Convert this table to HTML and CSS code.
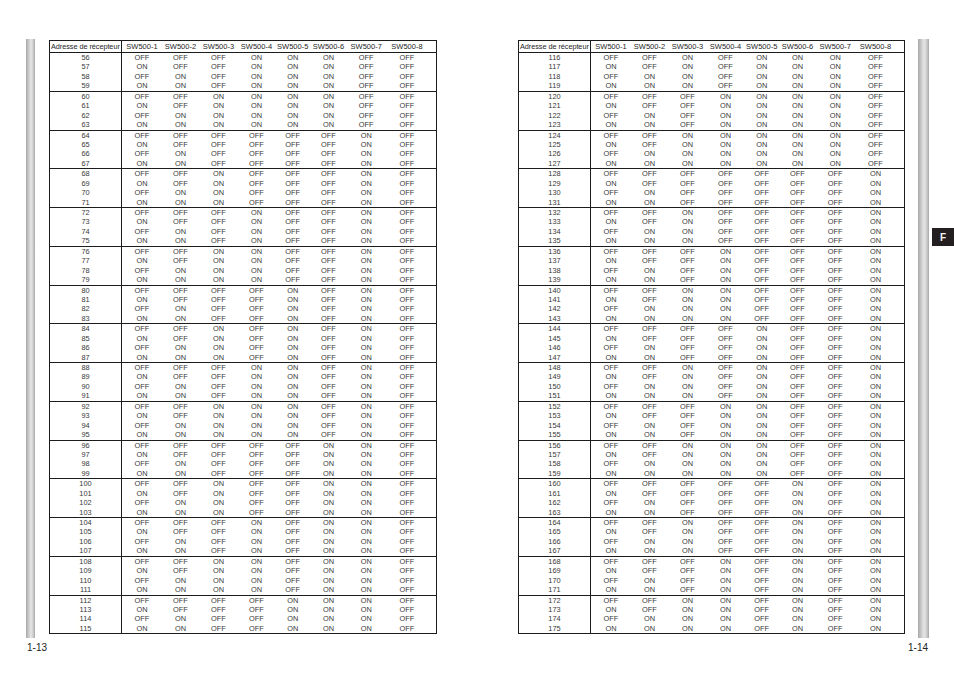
FILE: index.html
```html
<!DOCTYPE html>
<html lang="fr">
<head>
<meta charset="utf-8">
<title>Adresse de récepteur 56–175</title>
<link rel="stylesheet" href="styles.css">
</head>
<body>
<main class="spread">
  <section class="page page-left">
    <div class="page-body">
      <div class="bar"></div>
      <table class="sw">
        <thead><tr><th>Adresse de récepteur<th>SW500-1<th>SW500-2<th>SW500-3<th>SW500-4<th>SW500-5<th>SW500-6<th>SW500-7<th>SW500-8</tr></thead>
        <tbody>
        <tr><td>56<td>OFF<td>OFF<td>OFF<td>ON<td>ON<td>ON<td>OFF<td>OFF
        <tr><td>57<td>ON<td>OFF<td>OFF<td>ON<td>ON<td>ON<td>OFF<td>OFF
        <tr><td>58<td>OFF<td>ON<td>OFF<td>ON<td>ON<td>ON<td>OFF<td>OFF
        <tr><td>59<td>ON<td>ON<td>OFF<td>ON<td>ON<td>ON<td>OFF<td>OFF
        <tbody>
        <tr><td>60<td>OFF<td>OFF<td>ON<td>ON<td>ON<td>ON<td>OFF<td>OFF
        <tr><td>61<td>ON<td>OFF<td>ON<td>ON<td>ON<td>ON<td>OFF<td>OFF
        <tr><td>62<td>OFF<td>ON<td>ON<td>ON<td>ON<td>ON<td>OFF<td>OFF
        <tr><td>63<td>ON<td>ON<td>ON<td>ON<td>ON<td>ON<td>OFF<td>OFF
        <tbody>
        <tr><td>64<td>OFF<td>OFF<td>OFF<td>OFF<td>OFF<td>OFF<td>ON<td>OFF
        <tr><td>65<td>ON<td>OFF<td>OFF<td>OFF<td>OFF<td>OFF<td>ON<td>OFF
        <tr><td>66<td>OFF<td>ON<td>OFF<td>OFF<td>OFF<td>OFF<td>ON<td>OFF
        <tr><td>67<td>ON<td>ON<td>OFF<td>OFF<td>OFF<td>OFF<td>ON<td>OFF
        <tbody>
        <tr><td>68<td>OFF<td>OFF<td>ON<td>OFF<td>OFF<td>OFF<td>ON<td>OFF
        <tr><td>69<td>ON<td>OFF<td>ON<td>OFF<td>OFF<td>OFF<td>ON<td>OFF
        <tr><td>70<td>OFF<td>ON<td>ON<td>OFF<td>OFF<td>OFF<td>ON<td>OFF
        <tr><td>71<td>ON<td>ON<td>ON<td>OFF<td>OFF<td>OFF<td>ON<td>OFF
        <tbody>
        <tr><td>72<td>OFF<td>OFF<td>OFF<td>ON<td>OFF<td>OFF<td>ON<td>OFF
        <tr><td>73<td>ON<td>OFF<td>OFF<td>ON<td>OFF<td>OFF<td>ON<td>OFF
        <tr><td>74<td>OFF<td>ON<td>OFF<td>ON<td>OFF<td>OFF<td>ON<td>OFF
        <tr><td>75<td>ON<td>ON<td>OFF<td>ON<td>OFF<td>OFF<td>ON<td>OFF
        <tbody>
        <tr><td>76<td>OFF<td>OFF<td>ON<td>ON<td>OFF<td>OFF<td>ON<td>OFF
        <tr><td>77<td>ON<td>OFF<td>ON<td>ON<td>OFF<td>OFF<td>ON<td>OFF
        <tr><td>78<td>OFF<td>ON<td>ON<td>ON<td>OFF<td>OFF<td>ON<td>OFF
        <tr><td>79<td>ON<td>ON<td>ON<td>ON<td>OFF<td>OFF<td>ON<td>OFF
        <tbody>
        <tr><td>80<td>OFF<td>OFF<td>OFF<td>OFF<td>ON<td>OFF<td>ON<td>OFF
        <tr><td>81<td>ON<td>OFF<td>OFF<td>OFF<td>ON<td>OFF<td>ON<td>OFF
        <tr><td>82<td>OFF<td>ON<td>OFF<td>OFF<td>ON<td>OFF<td>ON<td>OFF
        <tr><td>83<td>ON<td>ON<td>OFF<td>OFF<td>ON<td>OFF<td>ON<td>OFF
        <tbody>
        <tr><td>84<td>OFF<td>OFF<td>ON<td>OFF<td>ON<td>OFF<td>ON<td>OFF
        <tr><td>85<td>ON<td>OFF<td>ON<td>OFF<td>ON<td>OFF<td>ON<td>OFF
        <tr><td>86<td>OFF<td>ON<td>ON<td>OFF<td>ON<td>OFF<td>ON<td>OFF
        <tr><td>87<td>ON<td>ON<td>ON<td>OFF<td>ON<td>OFF<td>ON<td>OFF
        <tbody>
        <tr><td>88<td>OFF<td>OFF<td>OFF<td>ON<td>ON<td>OFF<td>ON<td>OFF
        <tr><td>89<td>ON<td>OFF<td>OFF<td>ON<td>ON<td>OFF<td>ON<td>OFF
        <tr><td>90<td>OFF<td>ON<td>OFF<td>ON<td>ON<td>OFF<td>ON<td>OFF
        <tr><td>91<td>ON<td>ON<td>OFF<td>ON<td>ON<td>OFF<td>ON<td>OFF
        <tbody>
        <tr><td>92<td>OFF<td>OFF<td>ON<td>ON<td>ON<td>OFF<td>ON<td>OFF
        <tr><td>93<td>ON<td>OFF<td>ON<td>ON<td>ON<td>OFF<td>ON<td>OFF
        <tr><td>94<td>OFF<td>ON<td>ON<td>ON<td>ON<td>OFF<td>ON<td>OFF
        <tr><td>95<td>ON<td>ON<td>ON<td>ON<td>ON<td>OFF<td>ON<td>OFF
        <tbody>
        <tr><td>96<td>OFF<td>OFF<td>OFF<td>OFF<td>OFF<td>ON<td>ON<td>OFF
        <tr><td>97<td>ON<td>OFF<td>OFF<td>OFF<td>OFF<td>ON<td>ON<td>OFF
        <tr><td>98<td>OFF<td>ON<td>OFF<td>OFF<td>OFF<td>ON<td>ON<td>OFF
        <tr><td>99<td>ON<td>ON<td>OFF<td>OFF<td>OFF<td>ON<td>ON<td>OFF
        <tbody>
        <tr><td>100<td>OFF<td>OFF<td>ON<td>OFF<td>OFF<td>ON<td>ON<td>OFF
        <tr><td>101<td>ON<td>OFF<td>ON<td>OFF<td>OFF<td>ON<td>ON<td>OFF
        <tr><td>102<td>OFF<td>ON<td>ON<td>OFF<td>OFF<td>ON<td>ON<td>OFF
        <tr><td>103<td>ON<td>ON<td>ON<td>OFF<td>OFF<td>ON<td>ON<td>OFF
        <tbody>
        <tr><td>104<td>OFF<td>OFF<td>OFF<td>ON<td>OFF<td>ON<td>ON<td>OFF
        <tr><td>105<td>ON<td>OFF<td>OFF<td>ON<td>OFF<td>ON<td>ON<td>OFF
        <tr><td>106<td>OFF<td>ON<td>OFF<td>ON<td>OFF<td>ON<td>ON<td>OFF
        <tr><td>107<td>ON<td>ON<td>OFF<td>ON<td>OFF<td>ON<td>ON<td>OFF
        <tbody>
        <tr><td>108<td>OFF<td>OFF<td>ON<td>ON<td>OFF<td>ON<td>ON<td>OFF
        <tr><td>109<td>ON<td>OFF<td>ON<td>ON<td>OFF<td>ON<td>ON<td>OFF
        <tr><td>110<td>OFF<td>ON<td>ON<td>ON<td>OFF<td>ON<td>ON<td>OFF
        <tr><td>111<td>ON<td>ON<td>ON<td>ON<td>OFF<td>ON<td>ON<td>OFF
        <tbody>
        <tr><td>112<td>OFF<td>OFF<td>OFF<td>OFF<td>ON<td>ON<td>ON<td>OFF
        <tr><td>113<td>ON<td>OFF<td>OFF<td>OFF<td>ON<td>ON<td>ON<td>OFF
        <tr><td>114<td>OFF<td>ON<td>OFF<td>OFF<td>ON<td>ON<td>ON<td>OFF
        <tr><td>115<td>ON<td>ON<td>OFF<td>OFF<td>ON<td>ON<td>ON<td>OFF
        </tbody>
      </table>
    </div>
    <div class="folio">1-13</div>
  </section>

  <section class="page page-right">
    <div class="page-body">
      <table class="sw">
        <thead><tr><th>Adresse de récepteur<th>SW500-1<th>SW500-2<th>SW500-3<th>SW500-4<th>SW500-5<th>SW500-6<th>SW500-7<th>SW500-8</tr></thead>
        <tbody>
        <tr><td>116<td>OFF<td>OFF<td>ON<td>OFF<td>ON<td>ON<td>ON<td>OFF
        <tr><td>117<td>ON<td>OFF<td>ON<td>OFF<td>ON<td>ON<td>ON<td>OFF
        <tr><td>118<td>OFF<td>ON<td>ON<td>OFF<td>ON<td>ON<td>ON<td>OFF
        <tr><td>119<td>ON<td>ON<td>ON<td>OFF<td>ON<td>ON<td>ON<td>OFF
        <tbody>
        <tr><td>120<td>OFF<td>OFF<td>OFF<td>ON<td>ON<td>ON<td>ON<td>OFF
        <tr><td>121<td>ON<td>OFF<td>OFF<td>ON<td>ON<td>ON<td>ON<td>OFF
        <tr><td>122<td>OFF<td>ON<td>OFF<td>ON<td>ON<td>ON<td>ON<td>OFF
        <tr><td>123<td>ON<td>ON<td>OFF<td>ON<td>ON<td>ON<td>ON<td>OFF
        <tbody>
        <tr><td>124<td>OFF<td>OFF<td>ON<td>ON<td>ON<td>ON<td>ON<td>OFF
        <tr><td>125<td>ON<td>OFF<td>ON<td>ON<td>ON<td>ON<td>ON<td>OFF
        <tr><td>126<td>OFF<td>ON<td>ON<td>ON<td>ON<td>ON<td>ON<td>OFF
        <tr><td>127<td>ON<td>ON<td>ON<td>ON<td>ON<td>ON<td>ON<td>OFF
        <tbody>
        <tr><td>128<td>OFF<td>OFF<td>OFF<td>OFF<td>OFF<td>OFF<td>OFF<td>ON
        <tr><td>129<td>ON<td>OFF<td>OFF<td>OFF<td>OFF<td>OFF<td>OFF<td>ON
        <tr><td>130<td>OFF<td>ON<td>OFF<td>OFF<td>OFF<td>OFF<td>OFF<td>ON
        <tr><td>131<td>ON<td>ON<td>OFF<td>OFF<td>OFF<td>OFF<td>OFF<td>ON
        <tbody>
        <tr><td>132<td>OFF<td>OFF<td>ON<td>OFF<td>OFF<td>OFF<td>OFF<td>ON
        <tr><td>133<td>ON<td>OFF<td>ON<td>OFF<td>OFF<td>OFF<td>OFF<td>ON
        <tr><td>134<td>OFF<td>ON<td>ON<td>OFF<td>OFF<td>OFF<td>OFF<td>ON
        <tr><td>135<td>ON<td>ON<td>ON<td>OFF<td>OFF<td>OFF<td>OFF<td>ON
        <tbody>
        <tr><td>136<td>OFF<td>OFF<td>OFF<td>ON<td>OFF<td>OFF<td>OFF<td>ON
        <tr><td>137<td>ON<td>OFF<td>OFF<td>ON<td>OFF<td>OFF<td>OFF<td>ON
        <tr><td>138<td>OFF<td>ON<td>OFF<td>ON<td>OFF<td>OFF<td>OFF<td>ON
        <tr><td>139<td>ON<td>ON<td>OFF<td>ON<td>OFF<td>OFF<td>OFF<td>ON
        <tbody>
        <tr><td>140<td>OFF<td>OFF<td>ON<td>ON<td>OFF<td>OFF<td>OFF<td>ON
        <tr><td>141<td>ON<td>OFF<td>ON<td>ON<td>OFF<td>OFF<td>OFF<td>ON
        <tr><td>142<td>OFF<td>ON<td>ON<td>ON<td>OFF<td>OFF<td>OFF<td>ON
        <tr><td>143<td>ON<td>ON<td>ON<td>ON<td>OFF<td>OFF<td>OFF<td>ON
        <tbody>
        <tr><td>144<td>OFF<td>OFF<td>OFF<td>OFF<td>ON<td>OFF<td>OFF<td>ON
        <tr><td>145<td>ON<td>OFF<td>OFF<td>OFF<td>ON<td>OFF<td>OFF<td>ON
        <tr><td>146<td>OFF<td>ON<td>OFF<td>OFF<td>ON<td>OFF<td>OFF<td>ON
        <tr><td>147<td>ON<td>ON<td>OFF<td>OFF<td>ON<td>OFF<td>OFF<td>ON
        <tbody>
        <tr><td>148<td>OFF<td>OFF<td>ON<td>OFF<td>ON<td>OFF<td>OFF<td>ON
        <tr><td>149<td>ON<td>OFF<td>ON<td>OFF<td>ON<td>OFF<td>OFF<td>ON
        <tr><td>150<td>OFF<td>ON<td>ON<td>OFF<td>ON<td>OFF<td>OFF<td>ON
        <tr><td>151<td>ON<td>ON<td>ON<td>OFF<td>ON<td>OFF<td>OFF<td>ON
        <tbody>
        <tr><td>152<td>OFF<td>OFF<td>OFF<td>ON<td>ON<td>OFF<td>OFF<td>ON
        <tr><td>153<td>ON<td>OFF<td>OFF<td>ON<td>ON<td>OFF<td>OFF<td>ON
        <tr><td>154<td>OFF<td>ON<td>OFF<td>ON<td>ON<td>OFF<td>OFF<td>ON
        <tr><td>155<td>ON<td>ON<td>OFF<td>ON<td>ON<td>OFF<td>OFF<td>ON
        <tbody>
        <tr><td>156<td>OFF<td>OFF<td>ON<td>ON<td>ON<td>OFF<td>OFF<td>ON
        <tr><td>157<td>ON<td>OFF<td>ON<td>ON<td>ON<td>OFF<td>OFF<td>ON
        <tr><td>158<td>OFF<td>ON<td>ON<td>ON<td>ON<td>OFF<td>OFF<td>ON
        <tr><td>159<td>ON<td>ON<td>ON<td>ON<td>ON<td>OFF<td>OFF<td>ON
        <tbody>
        <tr><td>160<td>OFF<td>OFF<td>OFF<td>OFF<td>OFF<td>ON<td>OFF<td>ON
        <tr><td>161<td>ON<td>OFF<td>OFF<td>OFF<td>OFF<td>ON<td>OFF<td>ON
        <tr><td>162<td>OFF<td>ON<td>OFF<td>OFF<td>OFF<td>ON<td>OFF<td>ON
        <tr><td>163<td>ON<td>ON<td>OFF<td>OFF<td>OFF<td>ON<td>OFF<td>ON
        <tbody>
        <tr><td>164<td>OFF<td>OFF<td>ON<td>OFF<td>OFF<td>ON<td>OFF<td>ON
        <tr><td>165<td>ON<td>OFF<td>ON<td>OFF<td>OFF<td>ON<td>OFF<td>ON
        <tr><td>166<td>OFF<td>ON<td>ON<td>OFF<td>OFF<td>ON<td>OFF<td>ON
        <tr><td>167<td>ON<td>ON<td>ON<td>OFF<td>OFF<td>ON<td>OFF<td>ON
        <tbody>
        <tr><td>168<td>OFF<td>OFF<td>OFF<td>ON<td>OFF<td>ON<td>OFF<td>ON
        <tr><td>169<td>ON<td>OFF<td>OFF<td>ON<td>OFF<td>ON<td>OFF<td>ON
        <tr><td>170<td>OFF<td>ON<td>OFF<td>ON<td>OFF<td>ON<td>OFF<td>ON
        <tr><td>171<td>ON<td>ON<td>OFF<td>ON<td>OFF<td>ON<td>OFF<td>ON
        <tbody>
        <tr><td>172<td>OFF<td>OFF<td>ON<td>ON<td>OFF<td>ON<td>OFF<td>ON
        <tr><td>173<td>ON<td>OFF<td>ON<td>ON<td>OFF<td>ON<td>OFF<td>ON
        <tr><td>174<td>OFF<td>ON<td>ON<td>ON<td>OFF<td>ON<td>OFF<td>ON
        <tr><td>175<td>ON<td>ON<td>ON<td>ON<td>OFF<td>ON<td>OFF<td>ON
        </tbody>
      </table>
      <div class="bar"></div>
      <div class="tab">F</div>
    </div>
    <div class="folio">1-14</div>
  </section>
</main>
</body>
</html>
```
FILE: styles.css
```css
* { box-sizing: border-box; }

html, body {
  margin: 0;
  padding: 0;
  background: #ffffff;
}

body {
  width: 954px;
  height: 677px;
  overflow: hidden;
  font-family: "Liberation Sans", Arial, Helvetica, sans-serif;
  color: #2a2a2a;
}

.spread {
  display: flex;
  width: 954px;
  height: 677px;
}

.page {
  width: 477px;
  padding-top: 39px;
}

.page-body {
  display: flex;
  align-items: flex-start;
}

.bar {
  height: 599px;
  background: linear-gradient(to right, #a9a9a9 0%, #c4c4c4 25%, #e6e6e6 55%, #cfcfcf 78%, #a6a6a6 100%);
}

.page-left .bar {
  width: 9px;
  margin-left: 26px;
}

.page-left .sw {
  margin-left: 14px;
  width: 388px;
  --last: 50px;
}

.page-right .page-body {
  padding-left: 41px;
}

.page-right .sw {
  width: 387px;
  --last: 49px;
}

.page-right .bar {
  width: 11px;
  margin-left: 13px;
}

.tab {
  width: 22px;
  height: 18px;
  margin-left: 3px;
  margin-top: 189px;
  background: #231f20;
  color: #f2f2f2;
  font-weight: bold;
  font-size: 10px;
  display: flex;
  align-items: center;
  justify-content: center;
}

/* table */
.sw {
  display: block;
  margin-top: 1px;
  border: 1px solid #1c1c1c;
  border-spacing: 0;
}

.sw thead,
.sw tbody {
  display: block;
}

.sw tbody {
  border-top: 1px solid #1c1c1c;
}

.sw tr {
  display: grid;
  grid-template-columns: 72px 40px 37px 39px 37px 35.5px 36px 39.5px var(--last);
  height: 9.45px;
}

.sw thead tr {
  height: 11px;
  align-items: center;
}

.sw th,
.sw td {
  display: block;
  padding: 0;
  text-align: center;
  white-space: nowrap;
}

.sw th {
  font-weight: normal;
  font-size: 7.5px;
  color: #1e1e1e;
  line-height: 12px;
  height: 11px;
}

.sw th:first-child {
  text-align: left;
  padding-left: 1px;
  font-size: 7.3px;
  letter-spacing: -0.05px;
}

.sw td {
  font-size: 7.4px;
  line-height: 9.45px;
  color: #383838;
}

.sw th:first-child,
.sw td:first-child {
  border-right: 1px solid #1c1c1c;
}

.sw th:last-child,
.sw td:last-child {
  padding-right: 8px;
}

.folio {
  margin-top: 4px;
  font-size: 10px;
  line-height: 12px;
  color: #222222;
}

.page-left .folio {
  padding-left: 27px;
}

.page-right .folio {
  text-align: right;
  padding-right: 26px;
}
```
